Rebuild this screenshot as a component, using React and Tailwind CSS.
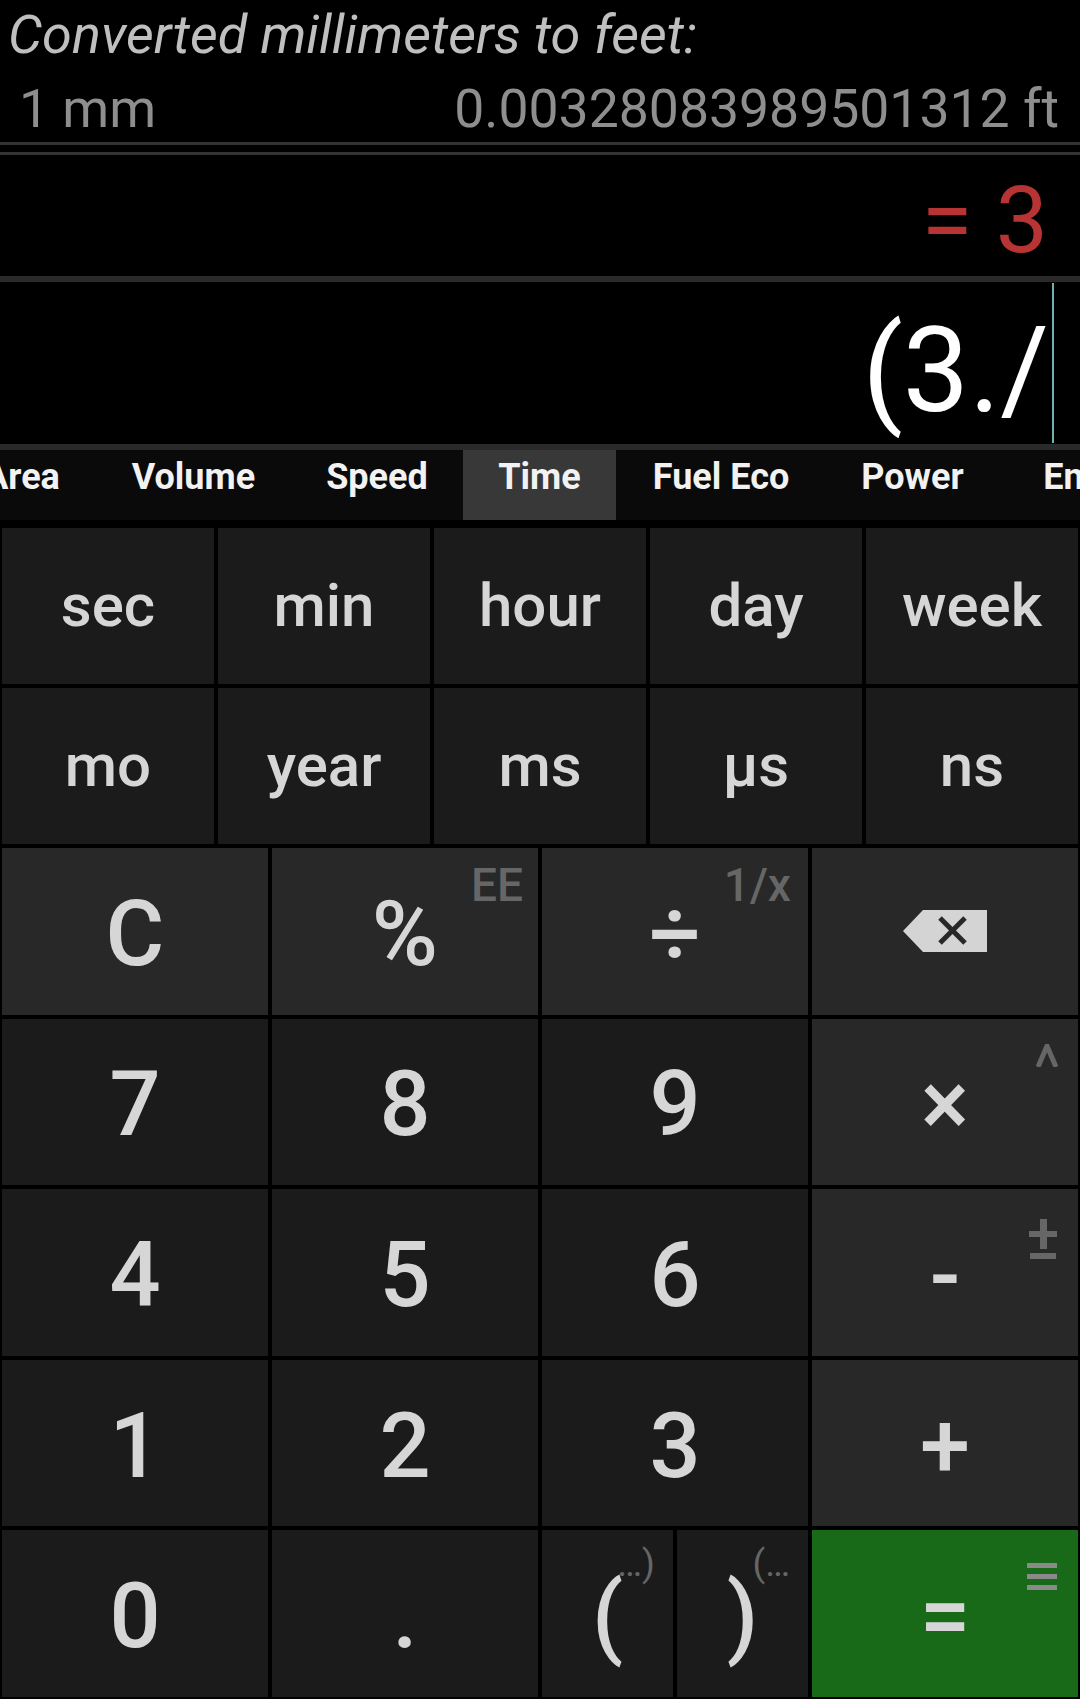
import React from "react";

const tabs = [
  { label: "Area", w: "w-[148px]" },
  { label: "Volume", w: "w-[195px]" },
  { label: "Speed", w: "w-[172px]" },
  { label: "Time", w: "w-[153px]", active: true },
  { label: "Fuel Eco", w: "w-[210px]" },
  { label: "Power", w: "w-[173px]" },
  { label: "Energy", w: "w-[200px]" },
];

const units = ["sec", "min", "hour", "day", "week", "mo", "year", "ms", "µs", "ns"];

function Key({ dark, green, children, sup, className = "" }) {
  const bg = green ? "bg-[#186a18]" : dark ? "bg-[#1b1b1b]" : "bg-[#282828]";
  return (
    <div className={`relative flex items-center justify-center ${bg} text-[#d6d6d6] text-[90px] font-medium leading-none ${className}`}>
      {children}
      {sup}
    </div>
  );
}

function Backspace() {
  return (
    <svg width="84" height="42" viewBox="0 0 84 42">
      <polygon points="0,21 20,0 84,0 84,42 20,42" fill="#d4d4d4" />
      <line x1="37" y1="8" x2="62" y2="33" stroke="#282828" strokeWidth="5" />
      <line x1="62" y1="8" x2="37" y2="33" stroke="#282828" strokeWidth="5" />
    </svg>
  );
}

export default function App() {
  return (
    <div className="w-[1080px] h-[1699px] bg-black flex flex-col overflow-hidden font-['Roboto',sans-serif]">
      {/* Conversion header */}
      <div className="pt-[4px] pl-[8px] text-[54px] leading-[62px] italic text-[#bfbfbf] h-[66px] whitespace-nowrap">
        Converted millimeters to feet:
      </div>
      <div className="mt-[11px] h-[63px] flex justify-between pl-[19px] pr-[21px] text-[53.5px] leading-[63px] text-[#8e8e8e] whitespace-nowrap">
        <span>1 mm</span>
        <span>0.00328083989501312 ft</span>
      </div>
      <div className="mt-[2px] h-[3px] bg-[#333333]" />
      <div className="mt-[7px] h-[3px] bg-[#333333]" />

      {/* Result */}
      <div className="h-[121px] flex justify-end items-end pr-[32px] pb-[1px]">
        <span className="text-[93px] leading-[109px] text-[#b83434]">= 3</span>
      </div>
      <div className="h-[6px] bg-[#2a2a2a]" />

      {/* Input */}
      <div className="h-[162px] flex justify-end pr-[26px]">
        <span className="self-end text-[118px] leading-[138px] mb-[4px] text-white">(3./</span>
        <div className="w-[2px] my-[1px] ml-[3px] bg-[#6fb0b0]" />
      </div>
      <div className="h-[6px] bg-[#2a2a2a]" />

      {/* Tabs */}
      <div className="h-[70px] bg-[#0a0a0a] flex overflow-hidden">
        <div className="flex ml-[-52px] shrink-0">
          {tabs.map((t) => (
            <div
              key={t.label}
              className={`${t.w} shrink-0 h-[70px] text-center font-bold text-[36px] leading-[42px] pt-[6px] text-[#f2f2f2] whitespace-nowrap ${t.active ? "bg-[#383838]" : ""}`}
            >
              {t.label}
            </div>
          ))}
        </div>
      </div>
      <div className="h-[8px]" />

      {/* Units */}
      <div className="grid grid-cols-5 gap-[4px] px-[2px]">
        {units.map((u) => (
          <div key={u} className="h-[156px] flex items-center justify-center bg-[#1b1b1b] text-[#d6d6d6] text-[60px] font-medium leading-none">
            {u}
          </div>
        ))}
      </div>
      <div className="h-[4px]" />

      {/* Calculator */}
      <div className="flex-1 grid grid-cols-4 grid-rows-5 gap-[4px] px-[2px] pb-[2px]">
        <Key className="pt-[7px]">C</Key>
        <Key
          className="pt-[7px]"
          sup={<span className="absolute top-[14px] right-[15px] text-[46px] leading-[46px] text-[#666666]">EE</span>}
        >
          %
        </Key>
        <Key
          className="pt-[7px]"
          sup={<span className="absolute top-[14px] right-[17px] text-[46px] leading-[46px] text-[#666666]">1/x</span>}
        >
          ÷
        </Key>
        <Key>
          <Backspace />
        </Key>

        <Key dark className="pt-[7px]">7</Key>
        <Key dark className="pt-[7px]">8</Key>
        <Key dark className="pt-[7px]">9</Key>
        <Key
          className="pt-[7px]"
          sup={
            <svg className="absolute top-[25px] right-[19px]" width="24" height="23" viewBox="0 0 24 23">
              <polyline points="3,23 12,2 21,23" fill="none" stroke="#666666" strokeWidth="5" />
            </svg>
          }
        >
          ×
        </Key>

        <Key dark className="pt-[7px]">4</Key>
        <Key dark className="pt-[7px]">5</Key>
        <Key dark className="pt-[7px]">6</Key>
        <Key
          className="pt-[7px]"
          sup={
            <svg className="absolute top-[30px] right-[21px]" width="28" height="40" viewBox="0 0 28 40">
              <rect x="11" y="0" width="7" height="30" fill="#666666" />
              <rect x="0" y="12" width="28" height="6" fill="#666666" />
              <rect x="1" y="34" width="26" height="6" fill="#666666" />
            </svg>
          }
        >
          -
        </Key>

        <Key dark className="pt-[7px]">1</Key>
        <Key dark className="pt-[7px]">2</Key>
        <Key dark className="pt-[7px]">3</Key>
        <Key className="pt-[7px]">+</Key>

        <Key dark className="pt-[7px]">0</Key>
        <Key dark className="pt-[7px]">.</Key>
        <div className="grid grid-cols-2 gap-[4px]">
          <Key
            dark
            className="pt-[7px]"
            sup={<span className="absolute top-[15px] right-[18px] text-[37px] leading-[37px] font-normal text-[#666666]">…)</span>}
          >
            (
          </Key>
          <Key
            dark
            className="pt-[7px]"
            sup={<span className="absolute top-[15px] right-[18px] text-[37px] leading-[37px] font-normal text-[#666666]">(…</span>}
          >
            )
          </Key>
        </div>
        <Key
          green
          className="pt-[7px]"
          sup={
            <svg className="absolute top-[33px] right-[21px]" width="30" height="27" viewBox="0 0 30 27">
              <rect x="0" y="0" width="30" height="5" fill="#8a8a8a" />
              <rect x="0" y="11" width="30" height="5" fill="#8a8a8a" />
              <rect x="0" y="22" width="30" height="5" fill="#8a8a8a" />
            </svg>
          }
        >
          =
        </Key>
      </div>
    </div>
  );
}
